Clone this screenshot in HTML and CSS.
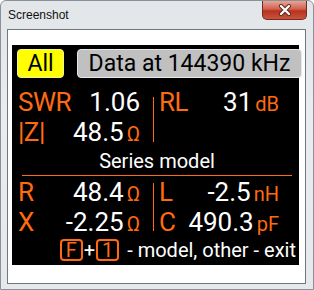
FILE: index.html
```html
<!DOCTYPE html>
<html lang="en">
<head>
    <meta charset="UTF-8">
    <meta name="viewport" content="width=device-width, initial-scale=1.0">
    <title>Screenshot</title>
    <link rel="stylesheet" href="styles.css">
</head>
<body>

    <div class="window">
        <!-- Thanh tiêu đề -->
        <div class="titlebar">
            <span class="title">Screenshot</span>
            <span class="close">
                <svg width="14" height="12" viewBox="0 0 14 12">
                    <path d="M3 2 L11 10 M11 2 L3 10" stroke="#5a2a22" stroke-width="4" stroke-linecap="round"/>
                    <path d="M3 2 L11 10 M11 2 L3 10" stroke="#ffffff" stroke-width="2.2" stroke-linecap="round"/>
                </svg>
            </span>
        </div>

        <div class="client">
            <!-- Màn hình của thiết bị -->
            <div class="screen">
                <div class="tabs">
                    <span class="btn btn-all">All</span>
                    <span class="btn btn-freq">Data at 144390 kHz</span>
                </div>

                <div class="block block-top">
                    <div class="cell"><span class="label">SWR</span><span class="value">1.06</span></div>
                    <div class="sep"></div>
                    <div class="cell cell-right"><span class="label">RL</span><span class="value">31<span class="unit">dB</span></span></div>
                    <div class="cell"><span class="label">|Z|</span><span class="value">48.5<span class="unit">Ω</span></span></div>
                    <div class="cell cell-right"></div>
                </div>

                <div class="model">Series model</div>
                <div class="rule"></div>

                <div class="block block-bottom">
                    <div class="cell"><span class="label">R</span><span class="value">48.4<span class="unit">Ω</span></span></div>
                    <div class="sep"></div>
                    <div class="cell cell-right"><span class="label">L</span><span class="value">-2.5<span class="unit">nH</span></span></div>
                    <div class="cell"><span class="label">X</span><span class="value">-2.25<span class="unit">Ω</span></span></div>
                    <div class="cell cell-right"><span class="label">C</span><span class="value">490.3<span class="unit">pF</span></span></div>
                </div>

                <div class="hint">
                    <span class="key">F</span><span class="plus">+</span><span class="key">1</span><span class="hint-text"> - model, other - exit</span>
                </div>
            </div>
        </div>
    </div>

</body>
</html>
```

FILE: styles.css
```css
/* Khung cửa sổ */
body {
    margin: 0;
}

.window {
    box-sizing: border-box;
    width: 314px;
    height: 290px;
    border: 1px solid #8a9198;
    border-radius: 6px 6px 0 0;
    background: linear-gradient(#e2e6e9, #eaedf0 40%, #e6e9ec);
    font-family: Roboto, "Liberation Sans", sans-serif;
}

.titlebar {
    display: flex;
    justify-content: space-between;
    align-items: flex-start;
    height: 28px;
    padding-left: 7px;
}

.title {
    font-family: "Liberation Sans", Arial, sans-serif;
    font-size: 12px;
    line-height: 16px;
    margin-top: 6px;
    color: #111;
}

.close {
    box-sizing: border-box;
    display: flex;
    align-items: center;
    justify-content: center;
    width: 45px;
    height: 19px;
    margin-right: 6px;
    border: 1px solid #6e2c22;
    border-top: none;
    border-radius: 0 0 5px 5px;
    background: linear-gradient(#e6a596, #d0604c 45%, #b8321f 55%, #c9533d);
}

/* Vùng client màu trắng */
.client {
    box-sizing: border-box;
    width: 299px;
    height: 255px;
    margin-left: 6px;
    border: 1px solid #6f7880;
    background: #fff;
    padding-top: 15px;
    padding-left: 4px;
}

/* Màn hình đen */
.screen {
    box-sizing: border-box;
    width: 287px;
    height: 220px;
    padding: 4px 3px 0 6px;
    background: #000;
    color: #fff;
}

.tabs {
    display: flex;
    gap: 13px;
    margin-left: -1px;
    height: 29px;
}

.btn {
    box-sizing: border-box;
    flex: none;
    height: 29px;
    line-height: 27px;
    border: 1px solid;
    border-radius: 4px;
    font-size: 23px;
    color: #000;
    text-align: center;
}

.btn-all {
    width: 47px;
    background: #ffff00;
    border-color: #f4f48a;
}

.btn-freq {
    width: 225px;
    background: #c0c0c0;
    border-color: #e6e6e6;
}

/* Các dòng số liệu */
.block {
    display: grid;
    grid-template-columns: 135px 1px 125px;
    grid-auto-rows: 30px;
}

.block-top {
    margin-top: 9px;
}

.block-bottom {
    margin-top: 1px;
}

.cell {
    box-sizing: border-box;
    display: flex;
    justify-content: space-between;
    align-items: baseline;
    padding-right: 13px;
    line-height: 30px;
    white-space: nowrap;
}

.cell-right {
    padding-right: 0;
    padding-left: 5px;
}

.sep {
    grid-column: 2;
    grid-row: 1 / 3;
    background: #ff6a10;
}

.block-top .sep {
    margin: 10px 0 5px;
}

.block-bottom .sep {
    margin: 6px 0 6px;
}

.label {
    color: #ff6a10;
    font-size: 26px;
    letter-spacing: -0.5px;
}

.value {
    font-size: 26px;
}

.unit {
    color: #ff6a10;
    font-size: 20px;
    margin-left: 3px;
}

.model {
    margin-top: 2px;
    font-size: 20px;
    line-height: 24px;
    text-align: center;
}

.rule {
    height: 1px;
    margin: 2px 4px 0;
    background: #ff6a10;
}

/* Dòng hướng dẫn phím */
.hint {
    display: flex;
    justify-content: flex-end;
    align-items: center;
    height: 24px;
    margin-top: 1px;
    font-size: 20px;
    line-height: 24px;
    white-space: pre;
}

.hint-text {
    margin-left: 3px;
}

.key {
    box-sizing: border-box;
    width: 23px;
    height: 22px;
    border: 2px solid #ff6a10;
    border-radius: 4px;
    color: #ff6a10;
    text-align: center;
    line-height: 18px;
}

.plus {
    margin: 0 1px;
}
```
